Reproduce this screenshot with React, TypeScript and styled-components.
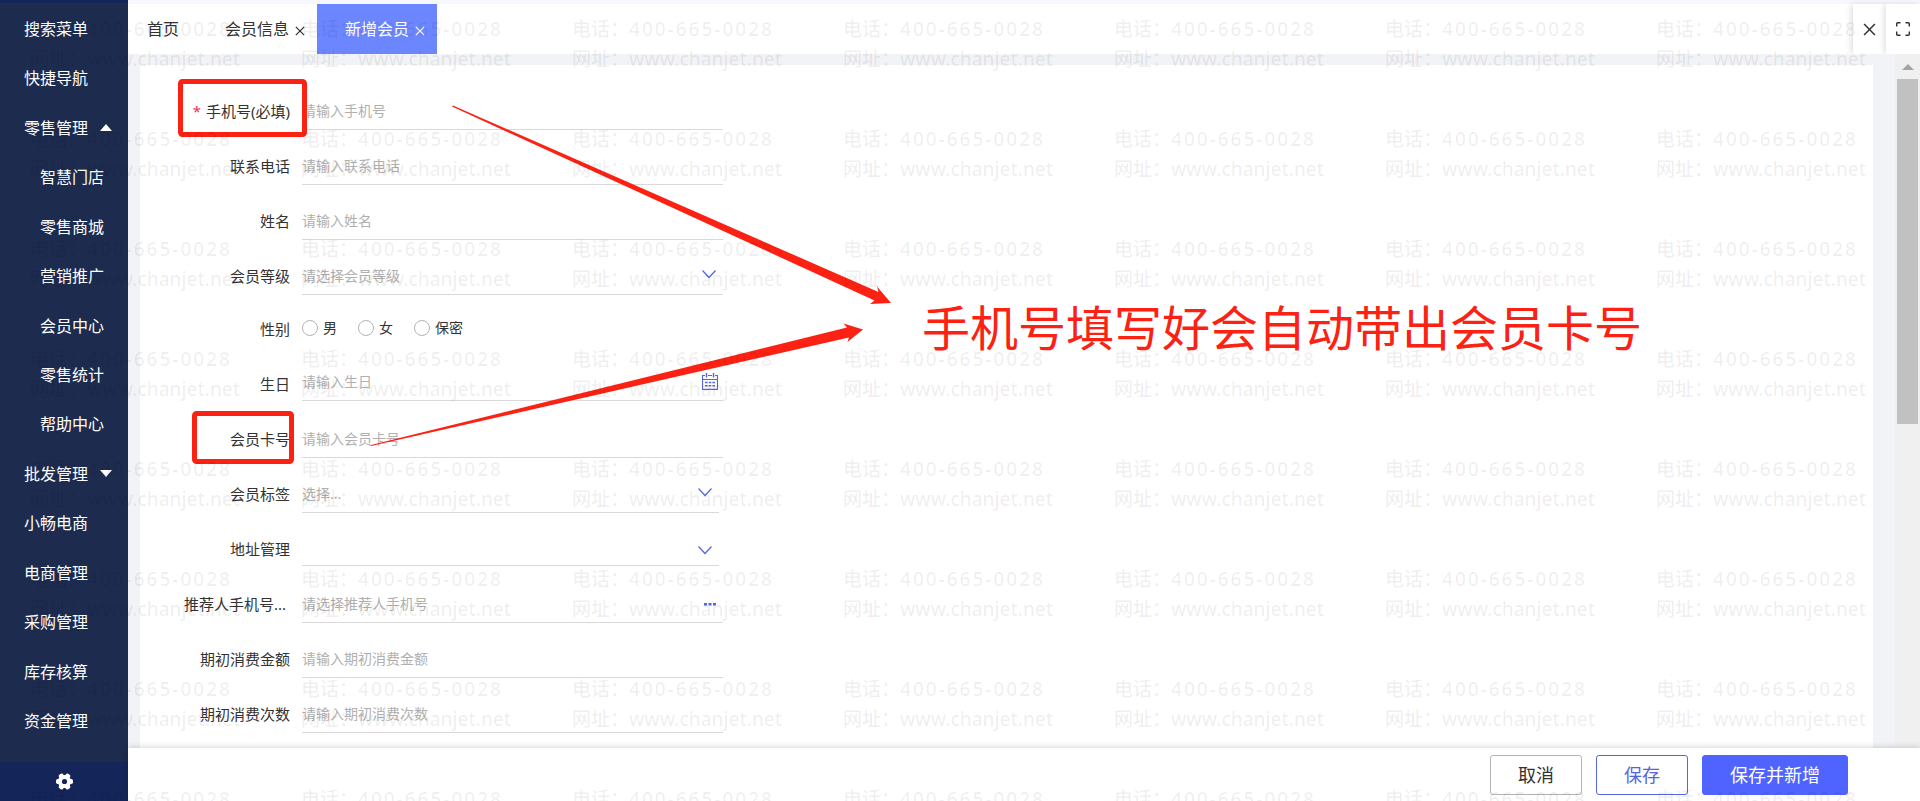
import React from 'react';
import styled, { createGlobalStyle, css } from 'styled-components';

const GlobalStyle = createGlobalStyle`
  *, *::before, *::after { box-sizing: border-box; }
  body {
    margin: 0;
    background: #fff;
    color: #333;
    font-family: "Noto Sans", "Noto Sans CJK SC", sans-serif;
    font-size: 15px;
  }
  button, input, select { font: inherit; color: inherit; }
  button { padding: 0; border: 0; background: none; cursor: pointer; }
`;

const RED = '#fb2213';
const BLUE = '#5564e0';

/* ---------- shell ---------- */

const Shell = styled.div`
  position: relative;
  display: flex;
  min-height: 100vh;
  overflow: hidden;
`;

const Sidebar = styled.aside`
  flex: none;
  width: 128px;
  display: flex;
  flex-direction: column;
  background: #1d2b4f;
  border-top: 3px solid #142559;
  color: #fff;
`;

const Menu = styled.nav`
  flex: 1;
  display: flex;
  flex-direction: column;
  padding: 1px 0 16px;
`;

const MenuItem = styled.button<{ $nested?: boolean }>`
  flex: 1;
  display: flex;
  align-items: center;
  gap: 12px;
  padding-left: ${(p) => (p.$nested ? 40 : 24)}px;
  font-size: 16px;
  line-height: 24px;
  white-space: nowrap;
`;

const Caret = styled.span<{ $open: boolean }>`
  border: 6px solid transparent;
  ${(p) =>
    p.$open
      ? css`border-top-width: 0; border-bottom: 7px solid #fff;`
      : css`border-bottom-width: 0; border-top: 7px solid #fff;`}
`;

const SettingsButton = styled.button`
  height: 39px;
  display: flex;
  align-items: center;
  justify-content: center;
  background: #142559;
`;

const Main = styled.main`
  flex: 1;
  min-width: 0;
  display: flex;
  flex-direction: column;
`;

/* ---------- top bar ---------- */

const TopBar = styled.header`
  height: 54px;
  display: flex;
  border-top: 4px solid #f6f8fd;
  background: #fff;
`;

const Tabs = styled.div`
  flex: 1;
  display: flex;
  overflow: hidden;
`;

const Tab = styled.div<{ $active?: boolean; $home?: boolean }>`
  display: flex;
  align-items: center;
  gap: 6px;
  padding: ${(p) => (p.$home ? '0 18px 0 19px' : '0 12px 0 28px')};
  background: ${(p) => (p.$active ? '#6b86ff' : 'transparent')};
  color: ${(p) => (p.$active ? '#fff' : '#333')};
  font-size: 16px;
  line-height: 24px;
  white-space: nowrap;
`;

const TabClose = styled.button`
  display: flex;
  padding-top: 4px;
`;

const BarButton = styled.button<{ $width: number }>`
  position: relative;
  width: ${(p) => p.$width}px;
  display: flex;
  align-items: center;
  justify-content: center;
  background: #fff;
  box-shadow: -2px 0 6px rgba(0, 0, 0, 0.12);
`;

/* ---------- content ---------- */

const Content = styled.div`
  position: relative;
  flex: 1;
  display: flex;
  background: #f2f3f6;
`;

const ScrollArea = styled.div`
  flex: 1;
  min-width: 0;
  display: flex;
  padding: 11px 22px 0 12px;
`;

const Card = styled.section`
  position: relative;
  flex: 1;
  min-width: 0;
  padding: 10px 0 15px;
  background: #fff;
`;

const ScrollTrack = styled.div`
  flex: none;
  width: 25px;
  display: flex;
  flex-direction: column;
  align-items: center;
  gap: 9px;
  padding-top: 10px;
  background: #f0f0f0;
`;

const ScrollUp = styled.span`
  border: 6px solid transparent;
  border-top-width: 0;
  border-bottom: 6px solid #a3a3a3;
`;

const ScrollThumb = styled.div`
  width: 21px;
  height: 345px;
  background: #c1c1c1;
`;

/* ---------- form ---------- */

const Row = styled.div<{ $short?: boolean }>`
  height: ${(p) => (p.$short ? 53 : 55)}px;
  display: grid;
  grid-template-columns: 150px minmax(0, 421px);
  column-gap: 12px;
  align-items: end;
`;

const labelStyle = css`
  justify-self: end;
  font-size: 15px;
  line-height: 38px;
  white-space: nowrap;
`;

const Label = styled.label<{ $clipped?: boolean }>`
  ${labelStyle}
  ${(p) => p.$clipped && css`width: 106px;`}
`;

const GroupLabel = styled.span`
  ${labelStyle}
`;

const Required = styled.span`
  margin-right: 5px;
  color: #f0314a;
`;

const Control = styled.div<{ $raised?: boolean; $narrow?: boolean }>`
  height: 35px;
  display: flex;
  align-items: center;
  position: relative;
  margin-bottom: ${(p) => (p.$raised ? 2 : 0)}px;
  margin-right: ${(p) => (p.$narrow ? 4 : 0)}px;
  border-bottom: 1px solid #d9d9d9;
`;

const fieldStyle = css`
  flex: 1;
  min-width: 0;
  height: 34px;
  padding: 0 0 4px;
  border: 0;
  outline: 0;
  background: transparent;
  font-size: 14px;
`;

const TextInput = styled.input`
  ${fieldStyle}
  &::placeholder { color: #b0b0b0; opacity: 1; }
`;

const SelectInput = styled.select`
  ${fieldStyle}
  appearance: none;
  color: #b0b0b0;
`;

const Adornment = styled.span<{ $low?: boolean }>`
  position: absolute;
  right: 7px;
  top: ${(p) => (p.$low ? 12 : 7)}px;
  display: flex;
  pointer-events: none;
`;

const IconButton = styled.button`
  display: flex;
  padding: 0 5px 3px 0;
`;

const RadioGroup = styled.div`
  height: 35px;
  display: flex;
  align-items: center;
  gap: 21px;
  margin-bottom: 3px;
`;

const RadioOption = styled.label`
  display: flex;
  align-items: center;
  gap: 5px;
  font-size: 14px;
  line-height: 20px;
`;

const Radio = styled.input`
  appearance: none;
  width: 16px;
  height: 16px;
  margin: 0;
  border: 1px solid #b5b5b5;
  border-radius: 50%;
  background: #fff;
  &:checked { border: 5px solid #4f63ff; }
`;

/* ---------- footer ---------- */

const Footer = styled.footer`
  position: relative;
  height: 53px;
  display: flex;
  justify-content: flex-end;
  align-items: center;
  gap: 14px;
  padding: 0 72px 0 0;
  background: #fff;
  box-shadow: 0 -1px 6px rgba(0, 0, 0, 0.16);
`;

const ActionButton = styled.button<{ $kind: 'plain' | 'outline' | 'primary' }>`
  height: 40px;
  padding: 0 27px;
  border: 1px solid ${(p) => ({ plain: '#b3b3b3', outline: BLUE, primary: '#4f63ff' })[p.$kind]};
  border-radius: 3px;
  background: ${(p) => (p.$kind === 'primary' ? '#4f63ff' : '#fff')};
  color: ${(p) => ({ plain: '#333', outline: BLUE, primary: '#fff' })[p.$kind]};
  font-size: 18px;
  line-height: 26px;
`;

/* ---------- annotation and watermark layers ---------- */

const Marks = styled.svg`
  position: absolute;
  left: 0;
  top: 0;
  pointer-events: none;
`;

const Note = styled.p`
  position: absolute;
  left: 782px;
  top: 227px;
  margin: 0;
  color: ${RED};
  font-size: 48px;
  line-height: 72px;
  white-space: nowrap;
`;

const WatermarkLayer = styled.div`
  position: absolute;
  inset: 0;
  overflow: hidden;
  display: grid;
  grid-template-columns: repeat(7, 271px);
  grid-auto-rows: 110px;
  padding: 14px 0 0 30px;
  color: rgba(0, 0, 0, 0.07);
  font-size: 19px;
  font-weight: 500;
  line-height: 30px;
  white-space: nowrap;
  pointer-events: none;
`;

const Phone = styled.span`
  letter-spacing: 2px;
`;

/* ---------- icons ---------- */

const Cross = ({ size, weight = 1 }: { size: number; weight?: number }) => (
  <svg width={size} height={size} viewBox="0 0 12 12" fill="none" stroke="currentColor" strokeWidth={weight}>
    <path d="M1 1 11 11M11 1 1 11" />
  </svg>
);

const Chevron = () => (
  <svg width="14" height="14" viewBox="0 0 14 14" fill="none" stroke={BLUE} strokeWidth="1.2">
    <path d="M0.5 3.5 7 10.5 13.5 3.5" />
  </svg>
);

const Calendar = () => (
  <svg width="16" height="17" viewBox="0 0 16 17" fill="none" stroke={BLUE}>
    <path d="M3 2.5H0.500V16.300H15.500V2.500H13M6 2.500H10M0.500 6.500H15.500" strokeWidth="1.2" />
    <path d="M4.500 0V4.500M11.500 0V4.500" strokeWidth="1.4" />
    <path d="M3 9.500H13M3 12.800H13" strokeWidth="1.600" strokeDasharray="2.6 1.1" />
  </svg>
);

const Dots = () => (
  <svg width="16" height="4" viewBox="0 0 16 4" fill={BLUE}>
    <path d="M2 1H5V3.400H2ZM6.500 1H9.500V3.400H6.500ZM11 1H14V3.400H11Z" />
  </svg>
);

const Gear = () => (
  <svg width="17" height="17" viewBox="0 0 17 17">
    <g fill="#fff">
      <circle cx="8.5" cy="8.5" r="6.6" />
      {[0, 60, 120].map((a) => (
        <rect key={a} x="0" y="6" width="17" height="5" rx="1.8" transform={`rotate(${a} 8.5 8.5)`} />
      ))}
    </g>
    <circle cx="8.5" cy="8.5" r="2.600" fill="#142559" />
  </svg>
);

const Expand = () => (
  <svg width="14" height="14" viewBox="0 0 14 14" fill="none" stroke="#333" strokeWidth="1.4">
    <path d="M0.7 4.5V1.7Q0.7 0.7 1.7 0.7H4.5M9.5 0.7H12.3Q13.3 0.7 13.3 1.7V4.5M13.3 9.5V12.3Q13.3 13.3 12.3 13.3H9.5M4.5 13.3H1.7Q0.7 13.3 0.7 12.3V9.5" />
  </svg>
);

/* ---------- data ---------- */

type MenuEntry = { text: string; nested?: boolean; open?: boolean };

const menu: MenuEntry[] = [
  { text: '搜索菜单' },
  { text: '快捷导航' },
  { text: '零售管理', open: true },
  { text: '智慧门店', nested: true },
  { text: '零售商城', nested: true },
  { text: '营销推广', nested: true },
  { text: '会员中心', nested: true },
  { text: '零售统计', nested: true },
  { text: '帮助中心', nested: true },
  { text: '批发管理', open: false },
  { text: '小畅电商' },
  { text: '电商管理' },
  { text: '采购管理' },
  { text: '库存核算' },
  { text: '资金管理' },
];

type FieldProps = {
  id: string;
  label: string;
  hint?: string;
  kind?: 'text' | 'select' | 'date' | 'lookup';
  required?: boolean;
  clipped?: boolean;
  raised?: boolean;
  narrow?: boolean;
};

const Field = ({ id, label, hint = '', kind = 'text', required, clipped, raised, narrow }: FieldProps) => (
  <Row>
    <Label htmlFor={id} $clipped={clipped}>
      {required && <Required>*</Required>}
      {label}
    </Label>
    <Control $raised={raised} $narrow={narrow}>
      {kind === 'select' ? (
        <>
          <SelectInput id={id} defaultValue="">
            <option value="">{hint}</option>
          </SelectInput>
          <Adornment $low={raised}><Chevron /></Adornment>
        </>
      ) : (
        <TextInput id={id} placeholder={hint} />
      )}
      {kind === 'date' && <IconButton type="button" aria-label="选择日期"><Calendar /></IconButton>}
      {kind === 'lookup' && <IconButton type="button" aria-label="选择推荐人"><Dots /></IconButton>}
    </Control>
  </Row>
);

const Annotations = () => (
  <>
    <Marks width="760" height="420" viewBox="0 0 760 420" aria-hidden="true">
      <g fill="none" stroke={RED} strokeWidth="5">
        <rect x="40.5" y="16.5" width="124" height="53" rx="2" />
        <rect x="54.5" y="348.5" width="97" height="48" rx="2" />
      </g>
      <g fill={RED}>
        <path d="M312 41.500 313 40.500 738.500 227 737 221.500 751 238 730 239 734.500 235.500Z" />
        <path d="M231 380 707 262.500 703.500 258.500 723 264.500 707.500 277 709 272.500 231 381Z" />
      </g>
    </Marks>
    <Note>手机号填写好会自动带出会员卡号</Note>
  </>
);

const Watermark = () => (
  <WatermarkLayer aria-hidden="true">
    {Array.from({ length: 56 }, (_, i) => (
      <div key={i}>
        <div>电话：<Phone>400-665-0028</Phone></div>
        <div>网址：www.chanjet.net</div>
      </div>
    ))}
  </WatermarkLayer>
);

export default function App() {
  return (
    <>
      <GlobalStyle />
      <Shell>
        <Sidebar>
          <Menu>
            {menu.map((m) => (
              <MenuItem key={m.text} type="button" $nested={m.nested}>
                {m.text}
                {m.open !== undefined && <Caret $open={m.open} />}
              </MenuItem>
            ))}
          </Menu>
          <SettingsButton type="button" aria-label="设置"><Gear /></SettingsButton>
        </Sidebar>

        <Main>
          <TopBar>
            <Tabs>
              <Tab $home><button type="button">首页</button></Tab>
              <Tab>
                <button type="button">会员信息</button>
                <TabClose type="button" aria-label="关闭会员信息"><Cross size={10} weight={1.5} /></TabClose>
              </Tab>
              <Tab $active>
                <button type="button">新增会员</button>
                <TabClose type="button" aria-label="关闭新增会员"><Cross size={10} weight={1.5} /></TabClose>
              </Tab>
            </Tabs>
            <BarButton type="button" aria-label="关闭" $width={33}><Cross size={13} weight={1.4} /></BarButton>
            <BarButton type="button" aria-label="全屏" $width={34}><Expand /></BarButton>
          </TopBar>

          <Content>
            <ScrollArea>
              <Card>
                <Field id="mobile" label="手机号(必填)" hint="请输入手机号" required />
                <Field id="phone" label="联系电话" hint="请输入联系电话" />
                <Field id="name" label="姓名" hint="请输入姓名" />
                <Field id="level" label="会员等级" hint="请选择会员等级" kind="select" />
                <Row $short>
                  <GroupLabel id="gender">性别</GroupLabel>
                  <RadioGroup role="radiogroup" aria-labelledby="gender">
                    {['男', '女', '保密'].map((g) => (
                      <RadioOption key={g}>
                        <Radio type="radio" name="gender" value={g} />
                        {g}
                      </RadioOption>
                    ))}
                  </RadioGroup>
                </Row>
                <Field id="birthday" label="生日" hint="请输入生日" kind="date" raised />
                <Field id="card" label="会员卡号" hint="请输入会员卡号" />
                <Field id="tags" label="会员标签" hint="选择..." kind="select" narrow />
                <Field id="address" label="地址管理" kind="select" raised narrow />
                <Field id="referrer" label="推荐人手机号..." hint="请选择推荐人手机号" kind="lookup" clipped />
                <Field id="amount" label="期初消费金额" hint="请输入期初消费金额" />
                <Field id="times" label="期初消费次数" hint="请输入期初消费次数" />
                <Annotations />
              </Card>
            </ScrollArea>
            <ScrollTrack>
              <ScrollUp />
              <ScrollThumb />
            </ScrollTrack>
          </Content>

          <Footer>
            <ActionButton type="button" $kind="plain">取消</ActionButton>
            <ActionButton type="button" $kind="outline">保存</ActionButton>
            <ActionButton type="button" $kind="primary">保存并新增</ActionButton>
          </Footer>
        </Main>
        <Watermark />
      </Shell>
    </>
  );
}
